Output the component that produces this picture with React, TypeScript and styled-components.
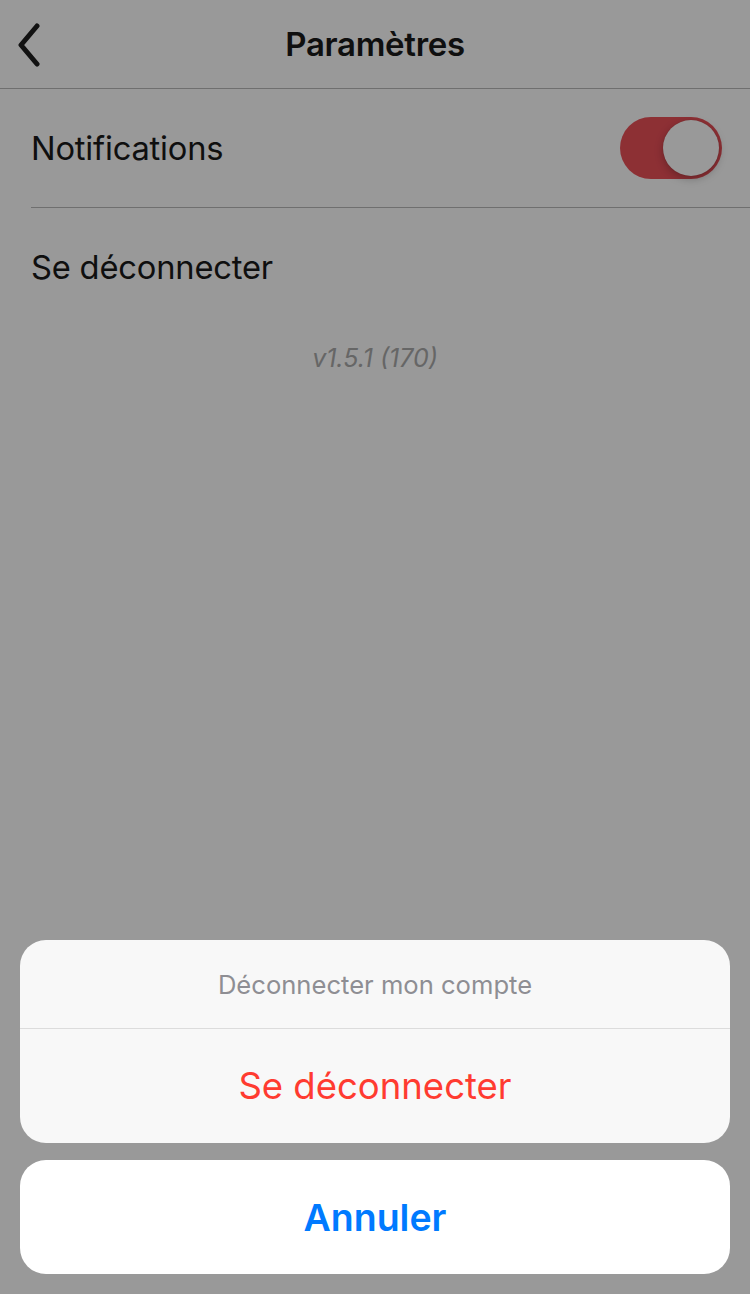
import React, { useState } from "react";
import styled, { createGlobalStyle } from "styled-components";

const GlobalStyle = createGlobalStyle`
  html, body {
    margin: 0;
    padding: 0;
    background: #ffffff;
  }
  body {
    font-family: Inter, "Noto Sans", "Liberation Sans", sans-serif;
    -webkit-font-smoothing: antialiased;
  }
`;

const Screen = styled.div`
  position: relative;
  width: 750px;
  height: 1294px;
  overflow: hidden;
  background: #ffffff;
  color: #1a1a1a;
`;

const NavBar = styled.header`
  display: flex;
  align-items: center;
  justify-content: center;
  position: relative;
  height: 88px;
  border-bottom: 1px solid #b9b9b9;
`;

const BackButton = styled.button`
  position: absolute;
  left: 8px;
  top: 21px;
  width: 40px;
  height: 48px;
  padding: 0;
  border: none;
  background: none;
  display: flex;
  align-items: center;
  justify-content: center;
`;

const NavTitle = styled.h1`
  margin: 0;
  font-size: 33px;
  font-weight: 600;
  letter-spacing: -0.3px;
  color: #1a1a1a;
`;

const Row = styled.div<{ $divider?: boolean }>`
  display: flex;
  align-items: center;
  justify-content: space-between;
  height: 118px;
  margin-left: 31px;
  padding-right: 28px;
  border-bottom: ${(p) => (p.$divider ? "1px solid #b9b9b9" : "none")};
`;

const RowLabel = styled.span`
  font-size: 32.7px;
  font-weight: 400;
  color: #1a1a1a;
  letter-spacing: -0.2px;
`;

const Track = styled.div<{ $on: boolean }>`
  display: flex;
  justify-content: ${(p) => (p.$on ? "flex-end" : "flex-start")};
  align-items: center;
  box-sizing: border-box;
  width: 102px;
  height: 62px;
  padding: 3px;
  border-radius: 31px;
  background: ${(p) => (p.$on ? "#eb5058" : "#e5e5ea")};
  cursor: pointer;
`;

const Knob = styled.div`
  width: 56px;
  height: 56px;
  border-radius: 50%;
  background: #ffffff;
  box-shadow: 0 3px 8px rgba(0, 0, 0, 0.25), 0 0 1px rgba(0, 0, 0, 0.2);
`;

const Version = styled.p`
  margin: 17px 0 0;
  text-align: center;
  font-size: 25px;
  font-style: italic;
  color: #aaaaaa;
`;

const Dimmer = styled.div`
  position: absolute;
  inset: 0;
  background: rgba(0, 0, 0, 0.4);
  display: flex;
  flex-direction: column;
  justify-content: flex-end;
  gap: 17px;
  padding: 0 20px 20px;
`;

const SheetGroup = styled.div`
  display: flex;
  flex-direction: column;
  border-radius: 26px;
  overflow: hidden;
  background: #f8f8f8;
`;

const SheetTitle = styled.div`
  display: flex;
  align-items: center;
  justify-content: center;
  height: 88px;
  border-bottom: 1px solid #dcdcdc;
  font-size: 25.6px;
  color: #8e8e93;
`;

const SheetButton = styled.button<{ $tone: "danger" | "primary"; $bold?: boolean }>`
  display: flex;
  align-items: center;
  justify-content: center;
  width: 100%;
  height: 114px;
  border: none;
  font-family: inherit;
  font-size: ${(p) => (p.$bold ? "37.5px" : "36.5px")};
  font-weight: ${(p) => (p.$bold ? 600 : 400)};
  color: ${(p) => (p.$tone === "danger" ? "#ff3b30" : "#007aff")};
  background: transparent;
  cursor: pointer;
`;

const CancelCard = styled.div`
  border-radius: 26px;
  background: #ffffff;
`;

const Chevron = () => (
  <svg width="30" height="44" viewBox="0 0 30 44">
    <polyline
      points="24,3 8,22 24,41"
      fill="none"
      stroke="#1e1e1e"
      strokeWidth="5"
      strokeLinecap="round"
      strokeLinejoin="round"
    />
  </svg>
);

const App = () => {
  const [notifications, setNotifications] = useState(true);

  return (
    <Screen>
      <GlobalStyle />
      <NavBar>
        <BackButton aria-label="Retour">
          <Chevron />
        </BackButton>
        <NavTitle>Paramètres</NavTitle>
      </NavBar>
      <Row $divider>
        <RowLabel>Notifications</RowLabel>
        <Track $on={notifications} onClick={() => setNotifications(!notifications)}>
          <Knob />
        </Track>
      </Row>
      <Row>
        <RowLabel>Se déconnecter</RowLabel>
      </Row>
      <Version>v1.5.1 (170)</Version>

      <Dimmer>
        <SheetGroup>
          <SheetTitle>Déconnecter mon compte</SheetTitle>
          <SheetButton $tone="danger">Se déconnecter</SheetButton>
        </SheetGroup>
        <CancelCard>
          <SheetButton $tone="primary" $bold>
            Annuler
          </SheetButton>
        </CancelCard>
      </Dimmer>
    </Screen>
  );
};

export default App;
